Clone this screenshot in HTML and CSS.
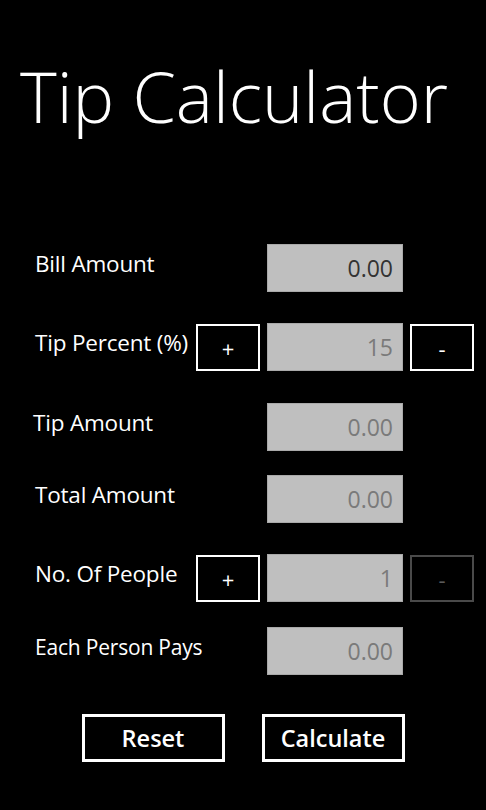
FILE: index.html
```html
<!Doctype html>
<html>

<head>
    <link rel="stylesheet" href="styles.css">
</head>

<body>
    <h1 class="title">Tip Calculator</h1>

    <div class="form">
        <div class="row rowBill">
            <label class="label" for="bill">Bill Amount</label>
            <span></span>
            <input class="field active" id="bill" type="text" value="0.00">
        </div>
        <div class="row rowTip">
            <label class="label" for="tipPercent">Tip Percent (%)</label>
            <button class="stepButton">+</button>
            <input class="field" id="tipPercent" type="text" value="15" readonly>
            <button class="stepButton">-</button>
        </div>
        <div class="row rowTipAmount">
            <label class="label" for="tipAmount">Tip Amount</label>
            <span></span>
            <input class="field" id="tipAmount" type="text" value="0.00" readonly>
        </div>
        <div class="row rowTotal">
            <label class="label" for="total">Total Amount</label>
            <span></span>
            <input class="field" id="total" type="text" value="0.00" readonly>
        </div>
        <div class="row rowPeople">
            <label class="label" for="people">No. Of People</label>
            <button class="stepButton">+</button>
            <input class="field" id="people" type="text" value="1" readonly>
            <button class="stepButton" disabled>-</button>
        </div>
        <div class="row rowEach">
            <label class="label small" for="each">Each Person Pays</label>
            <span></span>
            <input class="field" id="each" type="text" value="0.00" readonly>
        </div>
    </div>

    <div class="actions">
        <button class="actionButton">Reset</button>
        <button class="actionButton">Calculate</button>
    </div>
</body>

</html>
```

FILE: styles.css
```css
* {
    font-family: "Open Sans", "Noto Sans", sans-serif;
    box-sizing: border-box;
}

body {
    margin: 0;
    background-color: black;
    color: white;
    width: 486px;
    height: 810px;
    overflow: hidden;
}

.title {
    font-size: 70px;
    font-weight: 300;
    line-height: 1;
    margin: 0;
    padding: 61px 0 0 20px;
}

.form {
    display: flex;
    flex-direction: column;
    padding-left: 35px;
    margin-top: 113px;
}

.row {
    display: grid;
    grid-template-columns: 154px 64px 136px 64px;
    column-gap: 7px;
    align-items: center;
    height: 48px;
}

.rowTip {
    margin-top: 31px;
}

.rowTipAmount {
    margin-top: 32px;
}

.rowTotal {
    margin-top: 24px;
}

.rowPeople {
    margin-top: 31px;
}

.rowEach {
    margin-top: 25px;
}

.label {
    font-size: 22.5px;
    padding-bottom: 9px;
    white-space: nowrap;
    letter-spacing: -0.2px;
}

.rowTipAmount .label {
    margin-left: -2px;
}

.label.small {
    font-size: 21px;
}

.field {
    width: 136px;
    height: 48px;
    margin: 0;
    background-color: #bfbfbf;
    border: 1px solid #a9a9a9;
    color: #7a7a7a;
    font-size: 23px;
    text-align: right;
    padding: 0 9px 0 0;
    outline: none;
}

.field.active {
    color: #333333;
}

.stepButton {
    width: 64px;
    height: 47px;
    margin: 0;
    background-color: black;
    border: 2px solid white;
    color: white;
    font-size: 22px;
    padding: 2px 0 0 0;
}

.stepButton:disabled {
    border-color: #4a4a4a;
    color: #5a5a5a;
}

.actions {
    display: flex;
    justify-content: center;
    gap: 37px;
    margin-top: 39px;
}

.actionButton {
    width: 143px;
    height: 48px;
    background-color: black;
    border: 3px solid white;
    color: white;
    font-size: 23.5px;
    font-weight: 600;
    padding: 0;
}
```
